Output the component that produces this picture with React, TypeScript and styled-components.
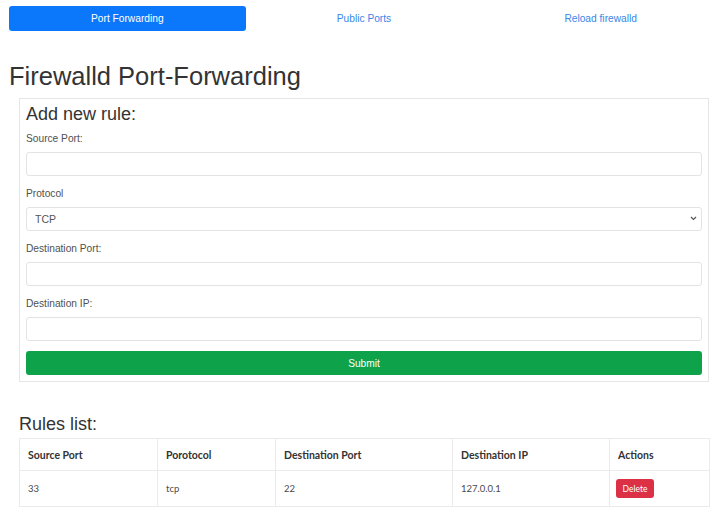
import React from "react";
import styled, { createGlobalStyle } from "styled-components";

const GlobalStyle = createGlobalStyle`
  body {
    margin: 0;
    background: #ffffff;
    font-family: "Liberation Sans", Arial, sans-serif;
    color: #333333;
  }
`;

const Page = styled.div`
  padding: 6px 1px 8px 9px;
`;

const Nav = styled.nav`
  display: grid;
  grid-template-columns: repeat(3, 1fr);
`;

const Tab = styled.a<{ $active?: boolean }>`
  display: flex;
  align-items: center;
  justify-content: center;
  height: 25px;
  border-radius: 3px;
  font-size: 10.2px;
  text-decoration: none;
  color: ${(p) => (p.$active ? "#ffffff" : "#3a86e8")};
  background: ${(p) => (p.$active ? "#0b78fb" : "transparent")};
`;

const Title = styled.h1`
  margin: 30px 0 7px 0;
  font-size: 25.5px;
  line-height: 30px;
  font-weight: 400;
  color: #333333;
`;

const Card = styled.div`
  margin: 0 10px 0 10px;
  border: 1px solid #e6e6e6;
  padding: 4px 6px 6px 6px;
`;

const CardTitle = styled.h2`
  margin: 0 0 7px 0;
  font-size: 18px;
  line-height: 22px;
  font-weight: 400;
  color: #333333;
`;

const Group = styled.div<{ $last?: boolean }>`
  margin-bottom: ${(p) => (p.$last ? 0 : 11)}px;
`;

const Label = styled.label`
  display: block;
  font-size: 10.2px;
  line-height: 14px;
  color: #505050;
  margin-bottom: 6px;
`;

const Input = styled.input`
  display: block;
  box-sizing: border-box;
  width: 100%;
  height: 24px;
  border: 1px solid #e3e3e3;
  border-radius: 3px;
  background: #ffffff;
  padding: 0 10px;
  font-size: 10px;
`;

const SelectWrap = styled.div`
  position: relative;
`;

const Select = styled.select`
  display: block;
  box-sizing: border-box;
  width: 100%;
  height: 24px;
  border: 1px solid #e3e3e3;
  border-radius: 3px;
  background: #ffffff;
  padding: 0 8px;
  font-family: "Liberation Sans", Arial, sans-serif;
  font-size: 10.5px;
  color: #555555;
  appearance: none;
`;

const Chevron = styled.svg`
  position: absolute;
  right: 5px;
  top: 9px;
  pointer-events: none;
`;

const SubmitButton = styled.button`
  display: block;
  width: 100%;
  height: 24px;
  margin-top: 10px;
  border: none;
  border-radius: 3px;
  background: #0ea34a;
  color: #ffffff;
  font-family: "Liberation Sans", Arial, sans-serif;
  font-size: 10.2px;
`;

const SectionTitle = styled.h2`
  margin: 31px 0 3px 10px;
  font-size: 18px;
  line-height: 22px;
  font-weight: 400;
  color: #333333;
`;

const Table = styled.table`
  margin-left: 10px;
  width: 690px;
  table-layout: fixed;
  border-collapse: collapse;
  font-family: Lato, "Liberation Sans", sans-serif;
  font-size: 9.5px;
  color: #4a4a4a;
`;

const Col = styled.col<{ $w: number }>`
  width: ${(p) => p.$w}px;
`;

const Th = styled.th`
  height: 31px;
  padding: 0 8px;
  text-align: left;
  font-size: 10.5px;
  font-weight: 700;
  color: #333333;
  border: 1px solid #ebebeb;
`;

const Td = styled.td`
  height: 35px;
  padding: 0 8px;
  border: 1px solid #ebebeb;
`;

const DeleteButton = styled.button`
  height: 19px;
  width: 38px;
  margin-left: -2px;
  padding: 0;
  border: none;
  border-radius: 3px;
  background: #dc3045;
  color: #ffffff;
  font-family: Lato, "Liberation Sans", sans-serif;
  font-size: 8.5px;
`;

const columns = [
  { title: "Source Port", w: 138 },
  { title: "Porotocol", w: 118 },
  { title: "Destination Port", w: 177 },
  { title: "Destination IP", w: 157 },
  { title: "Actions", w: 100 },
];

const rules = [{ source: "33", protocol: "tcp", dest: "22", ip: "127.0.0.1" }];

export default function App() {
  return (
    <Page>
      <GlobalStyle />
      <Nav>
        <Tab $active>Port Forwarding</Tab>
        <Tab>Public Ports</Tab>
        <Tab>Reload firewalld</Tab>
      </Nav>

      <Title>Firewalld Port-Forwarding</Title>

      <Card>
        <CardTitle>Add new rule:</CardTitle>
        <Group>
          <Label>Source Port:</Label>
          <Input />
        </Group>
        <Group>
          <Label>Protocol</Label>
          <SelectWrap>
            <Select defaultValue="tcp">
              <option value="tcp">TCP</option>
              <option value="udp">UDP</option>
            </Select>
            <Chevron width="7" height="5" viewBox="0 0 7 5">
              <path d="M1 1l2.5 2.5L6 1" fill="none" stroke="#555" strokeWidth="1.2" />
            </Chevron>
          </SelectWrap>
        </Group>
        <Group>
          <Label>Destination Port:</Label>
          <Input />
        </Group>
        <Group $last>
          <Label>Destination IP:</Label>
          <Input />
        </Group>
        <SubmitButton>Submit</SubmitButton>
      </Card>

      <SectionTitle>Rules list:</SectionTitle>
      <Table>
        <colgroup>
          {columns.map((c) => (
            <Col key={c.title} $w={c.w} />
          ))}
        </colgroup>
        <thead>
          <tr>
            {columns.map((c) => (
              <Th key={c.title}>{c.title}</Th>
            ))}
          </tr>
        </thead>
        <tbody>
          {rules.map((r, i) => (
            <tr key={i}>
              <Td>{r.source}</Td>
              <Td>{r.protocol}</Td>
              <Td>{r.dest}</Td>
              <Td>{r.ip}</Td>
              <Td>
                <DeleteButton>Delete</DeleteButton>
              </Td>
            </tr>
          ))}
        </tbody>
      </Table>
    </Page>
  );
}
